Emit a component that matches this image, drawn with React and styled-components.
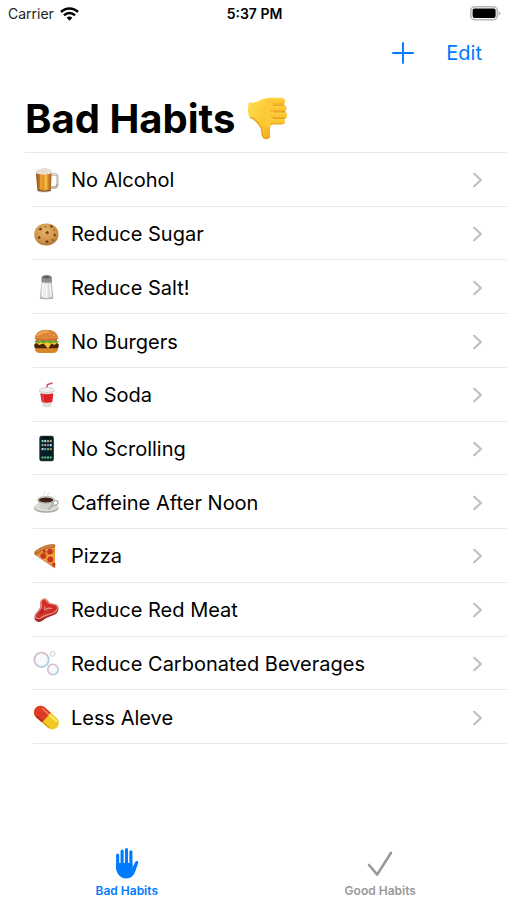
import React, { useState } from "react";
import styled, { createGlobalStyle } from "styled-components";

const blue = "#007aff";

const GlobalStyle = createGlobalStyle`
  *, *::before, *::after { box-sizing: border-box; }
  body {
    margin: 0;
    background: #fff;
    color: #000;
    font-family: Inter, "Liberation Sans", sans-serif;
  }
  button { font: inherit; border: 0; padding: 0; background: none; cursor: pointer; }
`;

const Screen = styled.div`
  display: flex;
  flex-direction: column;
  min-height: 100vh;
`;

const StatusBar = styled.header`
  display: grid;
  grid-template-columns: 1fr auto 1fr;
  align-items: center;
  height: 27px;
  padding: 0 6px 0 8px;
  font-size: 14px;
  line-height: 18px;
`;

const Carrier = styled.div`
  display: flex;
  align-items: center;
  gap: 6px;
  color: #222;
`;

const Clock = styled.time`
  font-weight: 600;
`;

const BatterySlot = styled.div`
  display: flex;
  justify-content: flex-end;
`;

const NavBar = styled.div`
  display: flex;
  justify-content: flex-end;
  align-items: center;
  gap: 32px;
  height: 52px;
  padding: 0 25px;
`;

const NavButton = styled.button`
  display: flex;
  align-items: center;
  color: ${blue};
  font-size: 20px;
  line-height: 24px;
`;

const Title = styled.h1`
  display: flex;
  align-items: center;
  gap: 12px;
  margin: 0;
  padding: 13px 25px 7px;
  font-size: 40px;
  line-height: 53px;
  font-weight: 700;
`;

const HabitList = styled.ul`
  display: grid;
  grid-auto-rows: 1fr;
  min-height: 592px;
  margin: 0 0 0 25px;
  padding: 0;
  list-style: none;
  border-top: 1px solid #e8e8e9;
`;

const HabitItem = styled.li`
  display: flex;
  margin-left: 8px;
  border-bottom: 1px solid #e8e8e9;
`;

const HabitButton = styled.button`
  display: flex;
  flex: 1;
  align-items: center;
  gap: 11px;
  padding: 2px 24px 0 0;
  color: #000;
  font-size: 20px;
  line-height: 26px;
  text-align: left;
`;

const HabitName = styled.span`
  flex: 1;
`;

const TabBar = styled.nav`
  display: grid;
  grid-template-columns: 1fr 1fr;
  margin-top: auto;
`;

const Tab = styled.button`
  display: flex;
  flex-direction: column;
  align-items: center;
  gap: 5px;
  padding-bottom: 2px;
  color: ${(p) => (p.$active ? blue : "#999")};
  font-size: 12px;
  line-height: 14px;
  font-weight: 600;
`;

const Wifi = () => (
  <svg width="19" height="14" viewBox="0 0 19 14" aria-hidden="true">
    <g fill="none" stroke="#000" strokeWidth="2.5">
      <path d="M1 5C5.8.2 13.2.2 18 5" />
      <path d="M4 8.3c3.100-3 7.900-3 11 0" />
    </g>
    <path d="M6.600 10.700c1.700-1.500 4.100-1.500 5.800 0L9.500 13.800z" fill="#000" />
  </svg>
);

const Battery = () => (
  <svg width="31" height="15" viewBox="0 0 31 15" aria-hidden="true">
    <rect x=".8" y=".8" width="26.5" height="13" rx="4" fill="#fff" stroke="#b5b5b5" strokeWidth="1.6" />
    <rect x="2.6" y="2.5" width="23" height="9.6" rx="2" fill="#000" />
    <path d="M28.7 5.200q3.200 2.100 0 4.200z" fill="#aaa" />
  </svg>
);

const Plus = () => (
  <svg width="22" height="22" viewBox="0 0 22 22" aria-hidden="true">
    <path d="M11 1v20M1 11h20" stroke={blue} strokeWidth="1.9" strokeLinecap="round" />
  </svg>
);

const Chevron = () => (
  <svg width="11" height="16" viewBox="0 0 11 16" aria-hidden="true">
    <path d="M2.2 1.800L8.900 8l-6.700 6.200" fill="none" stroke="#bfbfc2" strokeWidth="2.2" strokeLinecap="round" strokeLinejoin="round" />
  </svg>
);

const ThumbDown = () => (
  <svg width="42" height="44" viewBox="0 0 42 44" aria-hidden="true">
    <defs>
      <linearGradient id="thumb" x1="0" y1="0" x2="1" y2="1">
        <stop offset="0" stopColor="#ffdc55" />
        <stop offset=".6" stopColor="#fdc62f" />
        <stop offset="1" stopColor="#eda51e" />
      </linearGradient>
      <linearGradient id="finger" x1="0" y1="0" x2="0" y2="1">
        <stop offset="0" stopColor="#ffd345" />
        <stop offset=".65" stopColor="#fcc42e" />
        <stop offset="1" stopColor="#e9a31f" />
      </linearGradient>
    </defs>
    <path d="M2 5.500C7 6 10 5 15 2.500 19 .8 24 .5 28 1L27 27c-3 .5-4 2-4 5 0 4 1 9.500-3.500 10-5 .5-4.500-5-5-9-.5-3-4-6-6.500-9.500C6 22 4 21.500 2.500 20 .5 16 .5 10 2 5.500z" fill="url(#thumb)" />
    <path d="M3 20.500c3 0 4 1 6 3.500 3 3 5.200 5.500 5.600 8.500.5 4 0 9 4.900 9 2 0 3-1 3.300-3" fill="none" stroke="#e8a11b" strokeWidth="1.300" />
    <g fill="url(#finger)">
      <rect x="23" y=".8" width="15" height="7.600" rx="3.600" />
      <rect x="22" y="7.600" width="17.500" height="7.600" rx="3.600" />
      <rect x="22" y="14.500" width="18" height="7.300" rx="3.500" />
      <rect x="22" y="21" width="16" height="6.500" rx="3.200" />
    </g>
    <path d="M26 8.200h11M26 14.900h12M26 21.500h12" stroke="#dc951d" strokeWidth="1" />
    <path d="M23 3c-3 6-3 15-1 20l-2 7" stroke="#fdcb3a" strokeWidth="5" fill="none" />
  </svg>
);

const Emoji = ({ children }) => (
  <svg width="27" height="27" viewBox="0 0 27 27" aria-hidden="true">{children}</svg>
);

const Beer = () => (
  <Emoji>
    <defs>
      <linearGradient id="beer" x1="0" x2="1">
        <stop offset="0" stopColor="#8f4c12" />
        <stop offset=".3" stopColor="#d3831d" />
        <stop offset=".65" stopColor="#f3b137" />
        <stop offset="1" stopColor="#9b571b" />
      </linearGradient>
    </defs>
    <path d="M17 7.500h5q2.300 0 2.300 2.500v7.500q0 3-3 3h-4" fill="none" stroke="#b9b0a6" strokeWidth="2.400" />
    <path d="M18 7.500h4q2 .3 2 2.500v7" fill="none" stroke="#e5e0da" strokeWidth="1" />
    <path d="M3 5h15.500l-.7 19.500q-7 1.800-13.700 0z" fill="#d9cfc5" />
    <path d="M3 6h15.500l-.6 17q-6.700 1.500-13.500 0z" fill="url(#beer)" />
    <path d="M8 8v14M13 8v14" stroke="#ffd568" strokeWidth="1.200" opacity=".6" />
    <path d="M2.800 6.500C1.500 3.500 5 2 7 2.200 10 .2 14 .8 15.500 2.200c3-.5 4.200 2.300 3.300 4.300-5 1.500-11 1.500-16 0z" fill="#e8ded3" />
    <path d="M5 23.500q6 1.300 12.500 0" stroke="#6d3b17" fill="none" />
  </Emoji>
);

const Cookie = () => (
  <Emoji>
    <defs>
      <radialGradient id="cookie" cx=".45" cy=".35" r=".7">
        <stop offset="0" stopColor="#e8b46a" />
        <stop offset=".7" stopColor="#cf9145" />
        <stop offset="1" stopColor="#a7662a" />
      </radialGradient>
    </defs>
    <path d="M13.500 2.500c7 0 12 4.500 12 10.500 0 6.500-5 11.500-12 11.500S1.200 20 1.200 13.500c0-6.500 5-11 12.300-11z" fill="url(#cookie)" />
    <g fill="#70421f">
      <path d="M5.500 8.500l1.800-2 2 1.200-1.300 2zM16.500 5l2.500-.7 1.300 1.500-2 1.300zM12 11l2.800-1 1.300 2.300-2.200 1.300zM4.500 16l2.200-1 1 2-1.800 1.200zM20.500 13l2-.5.5 2.200-1.800 1zM12 20.500l2-1.500 2 1.700-2.200 1.500zM18.500 18.500l1.500-.5.700 1.500-1.300.8z" />
      <circle cx="12.500" cy="5.800" r=".7" /><circle cx="21" cy="9" r=".7" />
    </g>
  </Emoji>
);

const Salt = () => (
  <Emoji>
    <defs>
      <linearGradient id="salt" x1="0" x2="1">
        <stop offset="0" stopColor="#aaa" /><stop offset=".3" stopColor="#eee" />
        <stop offset=".7" stopColor="#d8d8d8" /><stop offset="1" stopColor="#a5a5a5" />
      </linearGradient>
    </defs>
    <path d="M8.500 8h10.300l1.500 16.500q-7 1.800-13.400 0z" fill="url(#salt)" />
    <path d="M10 10l-.7 13M13.600 10v14M17.200 10l.8 13" stroke="#f7f7f7" strokeWidth="1.700" />
    <path d="M8.500 4q0-3 5.200-3t5.200 3v4q-5 1.500-10.400 0z" fill="#85868a" />
    <path d="M9.500 3.500q4-3 8.300 0-4 1.500-8.300 0z" fill="#56575b" />
    <path d="M11 5v3M14 5.500v3M16.800 5v3" stroke="#a5a5a8" strokeWidth=".8" />
    <path d="M7.500 24q6.500 1.500 12.500 0" fill="none" stroke="#aaa" />
  </Emoji>
);

const Burger = () => (
  <Emoji>
    <path d="M2 18h23q1 6.500-4.500 7h-14Q1 24.500 2 18z" fill="#d98528" />
    <rect x="1.200" y="15" width="24.600" height="5.300" rx="2.600" fill="#4b2410" />
    <path d="M2 14h23l-3.500 3-3-1.500-3.500 5-4.500-5L6 17z" fill="#fdc52c" />
    <path d="M1.200 13.500Q4 11 7 12.500q3-1.500 6 0 3-1.500 6 0 4-1.500 6.800 1-2 2.500-5 .8-3 1.800-6.500 0-3 1.800-6.500 0-3.500 2-6.600-.8z" fill="#69a82d" />
    <path d="M3 11.500h21" stroke="#dc442e" strokeWidth="1.800" />
    <path d="M1.500 11Q2.500 1.800 13.500 1.800T25.500 11q-12 1.500-24 0z" fill="#dc8738" />
    <path d="M5 7Q9 3 15 3.500" stroke="#eda655" strokeWidth="2" fill="none" strokeLinecap="round" />
    <path d="M8 6.500l1 .3M12 4.500l1 .3M16 6.300l1 .3M20 7l1 .3" stroke="#f0c98b" />
  </Emoji>
);

const Soda = () => (
  <Emoji>
    <path d="M13.500 7l1-4.500 5-1.500" fill="none" stroke="#df454c" strokeWidth="1.500" />
    <path d="M7 8h13.500l-2.300 16.500q-4.300 1.500-8.600 0z" fill="#deded9" />
    <path d="M7.300 11.500q6.500 1.500 13 0l-1 8.500q-5.500 1.300-10.600 0z" fill="#dc2027" />
    <path d="M10 12.500v7.500" stroke="#f04f50" strokeWidth="1.300" />
    <path d="M6.500 8q1-2.500 7.300-2.500T21.300 8v1.500q-7.500 2-14.800 0z" fill="#f0f0ee" stroke="#c6c7c7" strokeWidth=".7" />
  </Emoji>
);

const appColors = [
  "#73c8c9", "#c9d0d1", "#d9a857", "#85b6dc",
  "#5fb987", "#de8570", "#68a7db", "#d6d9d9",
  "#c9d0d1", "#54b4bd", "#77bd80", "#c98770",
];

const Phone = () => (
  <Emoji>
    <rect x="6.300" y=".8" width="14.600" height="25.400" rx="2.300" fill="#303336" />
    <rect x="7.200" y="1.700" width="12.800" height="23.600" rx="1.500" fill="#052024" />
    <path d="M11 2.500h5" stroke="#000" strokeWidth="1.300" />
    {appColors.map((color, i) => (
      <rect key={i} x={8.600 + (i % 4) * 2.700} y={5 + Math.floor(i / 4) * 4} width="2" height="2.200" rx=".4" fill={color} />
    ))}
    <path d="M8.600 22.500h10.200" stroke="#62c590" strokeWidth="2" strokeDasharray="2 .7" />
  </Emoji>
);

const Coffee = () => (
  <Emoji>
    <ellipse cx="13.200" cy="19" rx="12.300" ry="4.800" fill="#a9a8a5" />
    <ellipse cx="13.200" cy="18" rx="12" ry="4.200" fill="#dddcda" />
    <path d="M20 12q5-1.500 5 1.500t-6 3.700" fill="none" stroke="#bcbab6" strokeWidth="1.600" />
    <path d="M4.800 11h16.500q0 9.500-8.200 9.500T4.800 11z" fill="#d0cfcb" />
    <path d="M15 20q5-2 5-7" fill="none" stroke="#aaa8a3" strokeWidth="1.500" />
    <ellipse cx="13" cy="10.800" rx="8.400" ry="3.200" fill="#f0efec" stroke="#99968f" strokeWidth=".8" />
    <ellipse cx="13" cy="11" rx="7.200" ry="2.400" fill="#402219" />
    <path d="M11 8c-3-3 3-2.500.5-6M15 8c-2-2 2-3 0-5" fill="none" stroke="#ddd" strokeWidth="1" />
  </Emoji>
);

const Pizza = () => (
  <Emoji>
    <path d="M2 10.500L22 4.500v20.500z" fill="#f0a238" />
    <path d="M3 10.500L22 6v4L7 14z" fill="#e0701e" opacity=".5" />
    <path d="M1.500 11.500Q.5 9 3 7.200 11 1.500 20.500 1q2 .2 2 2.500-.5 1.700-2.500 1.800Q11 6 4 11.500q-1.700 1-2.500 0z" fill="#c06d2e" />
    <path d="M3.500 8.500Q11 3.500 20 2.500" stroke="#dc9850" fill="none" />
    <g fill="#cd3520" stroke="#a92716" strokeWidth=".4">
      <circle cx="17" cy="8.600" r="2.600" /><circle cx="10.300" cy="13" r="2.600" />
      <circle cx="17.300" cy="16.500" r="2.800" /><circle cx="11.300" cy="8.300" r="1.300" />
      <path d="M22 20v4l-3-2q0-2.500 3-2z" />
    </g>
    <path d="M2 11.500l20 13.500" stroke="#b45f1d" strokeWidth=".8" />
  </Emoji>
);

const Meat = () => (
  <Emoji>
    <path d="M9 3q4-3 6 1 1.500 3 5 3 6 .5 5.500 5-.5 5-6 6.500Q14 20 9 24q-4 2.500-7-1-1.500-4 1.200-7Q8 11 7.500 8 6.500 5 9 3z" fill="#a92622" />
    <path d="M8.500 2.500q4-3 6 1 1.500 3 5 3 6 .5 5.500 4-.5 5-6 6.500Q13 18.500 8 21.500q-4 2-6-1 0-3 1.700-5Q8 11 7.500 8 6.500 4.500 8.500 2.500z" fill="#e38c7f" />
    <path d="M9.600 3q2.400-1 3.900 1.500Q15 7.500 19 7.500q5.500.5 5 3.500-1 4-6.500 5.300Q11 17.500 7.500 20.500q-3.500 1.500-4.500-1 0-2.300 2-4.100Q10 11 9 7.500 8 5 9.600 3z" fill="#d02e28" />
    <path d="M12 9.500l-1 3.500 5-2 3 .5" fill="none" stroke="#ec9f93" strokeWidth="1.100" />
    <path d="M7 16q3-1 4-4" fill="none" stroke="#a91d1c" strokeWidth="1.200" />
  </Emoji>
);

const Bubbles = () => (
  <Emoji>
    <defs>
      <linearGradient id="bubble" x1="0" y1="0" x2="1" y2="1">
        <stop offset="0" stopColor="#b5c5cf" /><stop offset=".45" stopColor="#e6b9cc" />
        <stop offset=".75" stopColor="#a6d3df" /><stop offset="1" stopColor="#cdbcd4" />
      </linearGradient>
    </defs>
    <g fill="#f6f9fb" stroke="url(#bubble)">
      <circle cx="8.500" cy="9.800" r="7.200" strokeWidth="1.800" />
      <circle cx="20" cy="19.500" r="5.200" strokeWidth="1.600" />
      <circle cx="19.500" cy="3.800" r="2.600" strokeWidth=".8" />
    </g>
    <path d="M4 9q1-4 4-4.500M17 18.500q.5-2 2-2.500" stroke="#fff" strokeWidth="1.500" fill="none" />
  </Emoji>
);

const Pill = () => (
  <Emoji>
    <g transform="rotate(42 13.500 13.500)">
      <rect x="-1" y="7" width="29" height="13.300" rx="6.600" fill="#f1c923" />
      <path d="M13.500 7H5.600a6.600 6.600 0 0 0 0 13.300h7.900z" fill="#df3a26" />
      <path d="M4.500 9.700h8.500" stroke="#f47660" strokeWidth="1.800" strokeLinecap="round" />
      <path d="M14.500 9.700H23" stroke="#fdea70" strokeWidth="2" strokeLinecap="round" />
      <path d="M5 19.300h8" stroke="#b62419" strokeWidth="1.500" />
      <path d="M14 19.300h8" stroke="#d4a112" strokeWidth="1.500" />
    </g>
  </Emoji>
);

const Hand = () => (
  <svg width="24" height="32" viewBox="0 0 24 32" aria-hidden="true">
    <g fill="none" stroke="currentColor" strokeWidth="3.100" strokeLinecap="round">
      <path d="M2.700 8v13M7.100 4v15M11.500 2.500V19M15.900 4.700V19" />
      <path d="M21.700 15.500l-3.500 8" />
    </g>
    <path d="M1.150 16h16.300v4.500l2-3.200 3.500-1-2.600 8Q18 31.500 11 31.500T1.150 23z" fill="currentColor" />
  </svg>
);

const Check = () => (
  <svg width="26" height="32" viewBox="0 0 26 32" aria-hidden="true">
    <path d="M2 18l8.200 9.600L24 5.800" fill="none" stroke="currentColor" strokeWidth="2.600" strokeLinecap="round" strokeLinejoin="round" />
  </svg>
);

const habits = [
  ["No Alcohol", Beer],
  ["Reduce Sugar", Cookie],
  ["Reduce Salt!", Salt],
  ["No Burgers", Burger],
  ["No Soda", Soda],
  ["No Scrolling", Phone],
  ["Caffeine After Noon", Coffee],
  ["Pizza", Pizza],
  ["Reduce Red Meat", Meat],
  ["Reduce Carbonated Beverages", Bubbles],
  ["Less Aleve", Pill],
];

const tabs = [
  ["Bad Habits", Hand],
  ["Good Habits", Check],
];

export default function App() {
  const [active, setActive] = useState("Bad Habits");
  return (
    <>
      <GlobalStyle />
      <Screen>
        <StatusBar>
          <Carrier>Carrier <Wifi /></Carrier>
          <Clock>5:37 PM</Clock>
          <BatterySlot><Battery /></BatterySlot>
        </StatusBar>
        <NavBar>
          <NavButton aria-label="Add habit"><Plus /></NavButton>
          <NavButton>Edit</NavButton>
        </NavBar>
        <main>
          <Title>Bad Habits <ThumbDown /></Title>
          <HabitList>
            {habits.map(([name, Icon]) => (
              <HabitItem key={name}>
                <HabitButton>
                  <Icon />
                  <HabitName>{name}</HabitName>
                  <Chevron />
                </HabitButton>
              </HabitItem>
            ))}
          </HabitList>
        </main>
        <TabBar>
          {tabs.map(([name, Icon]) => (
            <Tab key={name} $active={active === name} onClick={() => setActive(name)}>
              <Icon />
              {name}
            </Tab>
          ))}
        </TabBar>
      </Screen>
    </>
  );
}
